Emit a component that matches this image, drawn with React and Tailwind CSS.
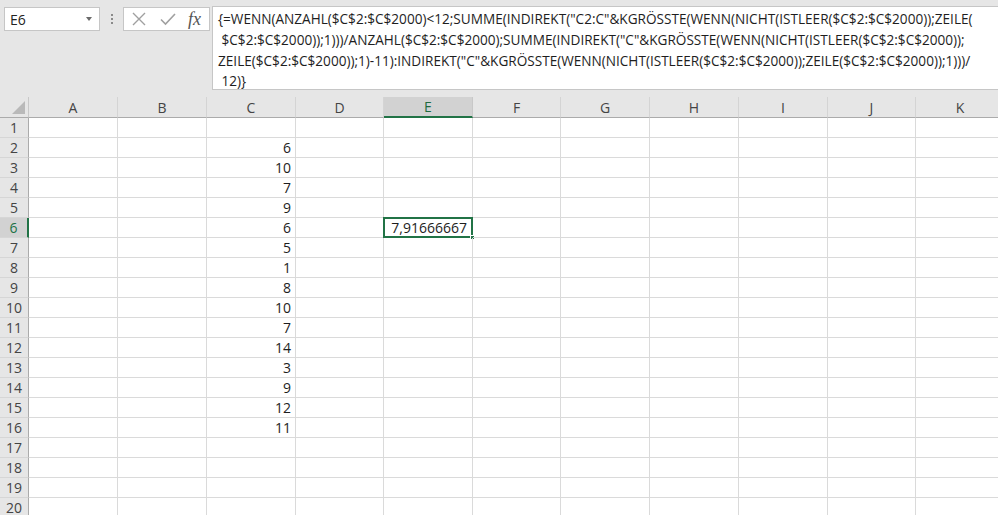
import React from "react";

const colW = [89, 89, 89, 88, 89, 88, 89, 89, 89, 88, 89];
const cols = ["A", "B", "C", "D", "E", "F", "G", "H", "I", "J", "K"];
const cVals = { 2: "6", 3: "10", 4: "7", 5: "9", 6: "6", 7: "5", 8: "1", 9: "8", 10: "10", 11: "7", 12: "14", 13: "3", 14: "9", 15: "12", 16: "11" };

const lines = [
  '{=WENN(ANZAHL($C$2:$C$2000)<12;SUMME(INDIREKT("C2:C"&KGRÖSSTE(WENN(NICHT(ISTLEER($C$2:$C$2000));ZEILE(',
  ' $C$2:$C$2000));1)))/ANZAHL($C$2:$C$2000);SUMME(INDIREKT("C"&KGRÖSSTE(WENN(NICHT(ISTLEER($C$2:$C$2000));',
  'ZEILE($C$2:$C$2000));1)-11):INDIREKT("C"&KGRÖSSTE(WENN(NICHT(ISTLEER($C$2:$C$2000));ZEILE($C$2:$C$2000));1)))/',
  ' 12)}',
];

export default function App() {
  const rows = Array.from({ length: 20 }, (_, i) => i + 1);
  return (
    <div className="w-[998px] h-[515px] overflow-hidden bg-[#e6e6e6] font-['Open_Sans',sans-serif]">
      {/* Toolbar / formula bar */}
      <div className="flex items-start h-[97px] pt-[6px]">
        <div className="shrink-0 ml-[4px] mt-px w-[96px] h-[24px] bg-white border border-[#c6c6c6] flex items-center justify-between pl-[5px] pr-[7px]">
          <span className="text-[14px] text-[#222]">E6</span>
          <svg width="6" height="4" viewBox="0 0 6 4"><path d="M0 0H6L3 4Z" fill="#6a6a6a" /></svg>
        </div>
        <div className="shrink-0 w-[23px] h-[26px] flex flex-col items-center justify-center gap-[2px]">
          <div className="w-[2px] h-[2px] bg-[#8a8a8a]" />
          <div className="w-[2px] h-[2px] bg-[#8a8a8a]" />
          <div className="w-[2px] h-[2px] bg-[#8a8a8a]" />
        </div>
        <div className="shrink-0 mt-px w-[87px] h-[24px] bg-white border border-[#c6c6c6] flex items-center">
          <svg className="ml-[8px]" width="14" height="14" viewBox="0 0 14 14">
            <path d="M1 1L13 13M13 1L1 13" stroke="#a0a0a0" strokeWidth="1.4" />
          </svg>
          <svg className="ml-[14px]" width="16" height="14" viewBox="0 0 16 14">
            <path d="M1 7.5L5.5 12L15 2" stroke="#a0a0a0" strokeWidth="1.6" fill="none" />
          </svg>
          <span className="ml-[12px] text-[18px] italic text-[#555] font-['Liberation_Serif',serif] leading-none">fx</span>
        </div>
        <div className="ml-[2px] flex-1 h-[84px] bg-white border border-[#c6c6c6] border-r-0 pl-[5px] pt-[2px] text-[13.6px] leading-[20.8px] text-[#1e1e1e] overflow-hidden">
          {lines.map((l, i) => (
            <div key={i} className="whitespace-pre">{l}</div>
          ))}
        </div>
      </div>

      {/* Grid */}
      <div className="bg-white">
        <div className="flex h-[21px] bg-[#e6e6e6]">
          <div className="shrink-0 w-[29px] h-full border-r border-[#c8c8c8] border-b border-b-[#ababab] relative">
            <svg className="absolute right-[3px] bottom-[3px]" width="13" height="13" viewBox="0 0 13 13">
              <path d="M13 0V13H0Z" fill="#b9b9b9" />
            </svg>
          </div>
          {cols.map((c, i) => (
            <div
              key={c}
              style={{ width: colW[i] }}
              className={
                "shrink-0 h-full flex items-center justify-center text-[14px] border-r " +
                (c === "E"
                  ? "bg-[#d2d2d2] text-[#1e6b3f] border-[#c8c8c8] border-b-2 border-b-[#217346]"
                  : "text-[#444] border-[#d4d4d4] border-b border-b-[#ababab]")
              }
            >
              {c}
            </div>
          ))}
        </div>
        {rows.map((r) => (
          <div key={r} className="flex h-[20px]">
            <div
              className={
                "shrink-0 w-[29px] h-full flex items-center justify-center text-[14px] border-b border-b-[#d6d6d6] " +
                (r === 6
                  ? "bg-[#d2d2d2] text-[#217346] border-r-2 border-r-[#217346]"
                  : "bg-[#e6e6e6] text-[#444] border-r border-r-[#ababab]")
              }
            >
              {r}
            </div>
            {cols.map((c, i) => (
              <div
                key={c}
                style={{ width: colW[i] }}
                className="shrink-0 relative h-full border-r border-b border-[#dadada] flex items-center justify-end pr-[4px] text-[14px] text-[#1e1e1e]"
              >
                {c === "C" && cVals[r] ? cVals[r] : null}
                {c === "E" && r === 6 ? (
                  <>
                    <span className="relative z-10 pr-px">7,91666667</span>
                    <div className="absolute -left-px -top-px right-[-1px] bottom-[-1px] border-2 border-[#217346]" />
                    <div className="absolute right-[-3px] bottom-[-3px] w-[5px] h-[5px] bg-[#217346] border border-white" />
                  </>
                ) : null}
              </div>
            ))}
          </div>
        ))}
      </div>
    </div>
  );
}
